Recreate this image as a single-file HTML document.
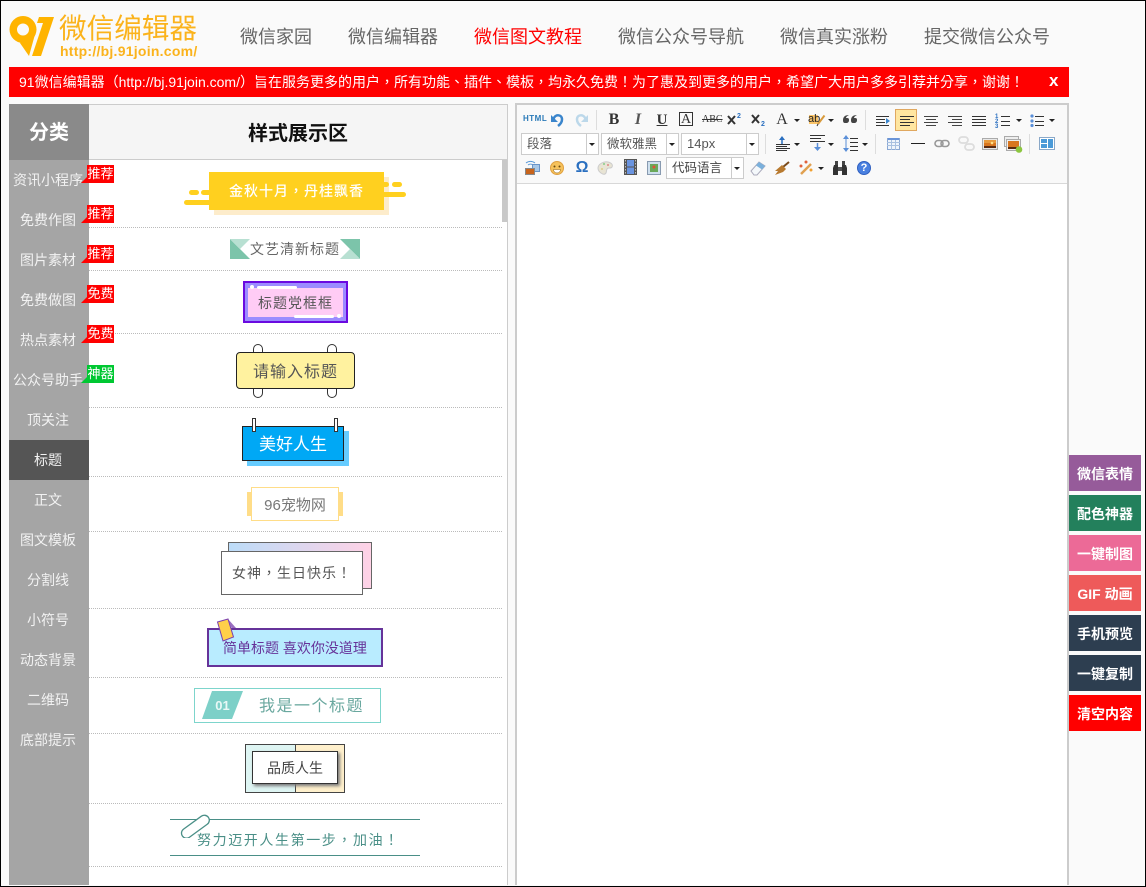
<!DOCTYPE html>
<html><head><meta charset="utf-8"><style>
*{box-sizing:border-box}
html,body{margin:0;padding:0}
body{width:1146px;height:887px;position:relative;overflow:hidden;background:#fafafa;font-family:"Liberation Sans","Noto Sans CJK SC",sans-serif;color:#666;text-spacing-trim:space-all}
div,span,svg{position:absolute}
.tc{font-family:"Liberation Sans","Noto Sans CJK TC",sans-serif}
.c{display:flex;align-items:center;justify-content:center;white-space:nowrap}
.nav{top:24px;font-size:18px;line-height:26px;color:#666;white-space:nowrap}
.s{left:8px;width:80px;height:40px;color:#f2f2f2;font-size:14px}
.t{left:87px;width:27px;height:18px;color:#fff;font-size:13px;line-height:18px;text-align:center;background:#f00;white-space:nowrap}
.tr{left:81px;width:0;height:0;border-style:solid;border-width:0 0 6px 6px;border-color:transparent transparent #f00 transparent}
.d{left:89px;width:413px;height:0;border-top:1px dotted #bbb}
.r{left:1069px;width:72px;height:36px;color:#fff;font-size:14px;font-weight:bold;padding-top:2px}
.sel{height:22px;border:1px solid #ccc;background:#fff;color:#555;font-size:12.5px;line-height:20px;padding-left:5px;white-space:nowrap}
.sel i{position:absolute;right:11px;top:0;height:20px;width:1px;background:#ccc}
.sel b{position:absolute;right:3px;top:9px;width:0;height:0;border:3px solid transparent;border-top:3px solid #222}
.ar{width:0;height:0;border:3px solid transparent;border-top:3px solid #222}
.sep{width:1px;height:20px;background:#ddd}
.tb{font-family:"Liberation Serif",serif;color:#333;white-space:nowrap;text-align:center;line-height:18px}
</style></head><body>
<!-- logo -->
<svg style="left:0;top:0" width="60" height="60"><g fill="#ffb400"><path fill-rule="evenodd" d="M23 16a13.500 13.500 0 1 0 0 27 13.500 13.500 0 0 0 0-27zm0 7.500a6 6 0 1 1 0 12 6 6 0 0 1 0-12z"/><path d="M36.500 29L29 56 20 43 27 36z"/><path d="M39 17H54L41 56H32L43 23H37z"/></g></svg>
<div style="left:59px;top:11px;font-size:27.6px;line-height:36px;color:#fbb31c;white-space:nowrap">微信编辑器</div>
<div style="left:60px;top:43px;font-size:14px;line-height:16px;color:#fbb31c;font-weight:bold;letter-spacing:.25px;white-space:nowrap">http://bj.91join.com/</div>
<div class="nav" style="left:240px">微信家园</div>
<div class="nav" style="left:348px">微信编辑器</div>
<div class="nav" style="left:474px;color:#f00">微信图文教程</div>
<div class="nav" style="left:618px">微信公众号导航</div>
<div class="nav" style="left:780px">微信真实涨粉</div>
<div class="nav" style="left:924px">提交微信公众号</div>
<!-- red bar -->
<div class="tc" style="left:9px;top:67px;width:1060px;height:30px;background:#f00;color:#fff;font-size:14px;line-height:30px;padding-left:10px;white-space:nowrap">91微信编辑器（http://bj.91join.com/）旨在服务更多的用户，所有功能、插件、模板，均永久免费！为了惠及到更多的用户，希望广大用户多多引荐并分享，谢谢！</div>
<div style="left:1049px;top:66px;height:30px;line-height:30px;color:#fff;font-weight:bold;font-size:17px">x</div>
<!-- sidebar -->
<div style="left:9px;top:104px;width:80px;height:781px;background:#a5a5a5"></div>
<div class="c" style="left:9px;top:104px;width:80px;height:56px;background:#8a8a8a;color:#fff;font-size:20px;font-weight:bold;padding-bottom:3px">分类</div>
<div style="left:9px;top:440px;width:80px;height:40px;background:#555"></div>
<div class="s c" style="top:160px">资讯小程序</div>
<div class="s c" style="top:200px">免费作图</div>
<div class="s c" style="top:240px">图片素材</div>
<div class="s c" style="top:280px">免费做图</div>
<div class="s c" style="top:320px">热点素材</div>
<div class="s c" style="top:360px">公众号助手</div>
<div class="s c" style="top:400px">顶关注</div>
<div class="s c" style="top:440px">标题</div>
<div class="s c" style="top:480px">正文</div>
<div class="s c" style="top:520px">图文模板</div>
<div class="s c" style="top:560px">分割线</div>
<div class="s c" style="top:600px">小符号</div>
<div class="s c" style="top:640px">动态背景</div>
<div class="s c" style="top:680px">二维码</div>
<div class="s c" style="top:720px">底部提示</div>
<!-- middle -->
<div style="left:89px;top:104px;width:419px;height:781px;background:#fff;border-top:1px solid #ccc;border-right:1px solid #ccc"></div>
<div class="c" style="left:89px;top:105px;width:418px;height:55px;background:#f5f5f5;border-bottom:1px solid #ccc;color:#111;font-size:20px;font-weight:bold;padding-bottom:2px">样式展示区</div>
<div style="left:502px;top:160px;width:5px;height:62px;background:#c8c8c8"></div>
<div class="d" style="top:227px"></div><div class="d" style="top:270px"></div><div class="d" style="top:333px"></div><div class="d" style="top:407px"></div><div class="d" style="top:476px"></div><div class="d" style="top:531px"></div><div class="d" style="top:608px"></div><div class="d" style="top:677px"></div><div class="d" style="top:733px"></div><div class="d" style="top:803px"></div><div class="d" style="top:866px"></div>
<div class="tr" style="top:177px"></div><div class="t" style="top:165px">推荐</div>
<div class="tr" style="top:217px"></div><div class="t" style="top:205px">推荐</div>
<div class="tr" style="top:257px"></div><div class="t" style="top:245px">推荐</div>
<div class="tr" style="top:297px"></div><div class="t" style="top:285px">免费</div>
<div class="tr" style="top:337px"></div><div class="t" style="top:325px">免费</div>
<div class="tr" style="top:377px;border-bottom-color:#00c832"></div><div class="t" style="top:365px;background:#00c832">神器</div>
<!-- 1 -->
<div style="left:214px;top:177px;width:175px;height:38px;background:#fdeccb"></div>
<svg style="left:184px;top:181px" width="224" height="25"><g fill="#ffd01f"><rect x="5" y="9" width="10" height="5" rx="2.500"/><rect x="17" y="9" width="10" height="5" rx="2.500"/><rect x="0" y="19" width="30" height="5" rx="2.500"/><rect x="198" y="1" width="7" height="5" rx="2.500"/><rect x="208" y="1" width="10" height="5" rx="2.500"/><rect x="198" y="11" width="24" height="5" rx="2.500"/></g></svg>
<div class="c tc" style="left:209px;top:172px;width:175px;height:38px;background:#ffd01f;color:#fff;font-size:14px;letter-spacing:1px;font-weight:500">金秋十月，丹桂飘香</div>
<!-- 2 -->
<svg style="left:230px;top:239px" width="130" height="20"><path fill="#7cc4aa" d="M0 0L20 20H0z"/><path fill="#b8e0d2" d="M0 0H20L10 10z"/><path fill="#7cc4aa" d="M130 20L110 0H130z"/><path fill="#b8e0d2" d="M130 20H110L120 10z"/></svg>
<div class="c" style="left:230px;top:239px;width:130px;height:20px;font-size:14px;letter-spacing:1px;color:#666">文艺清新标题</div>
<!-- 3 -->
<div style="left:243px;top:281px;width:105px;height:42px;border:2px solid #6a0ae0;background:#9b8cff"></div>
<div class="c" style="left:248px;top:288px;width:95px;height:29px;background:#ffccf5;font-size:14px;letter-spacing:1px;color:#555">标题党框框</div>
<div style="left:257px;top:286px;width:40px;height:3px;background:#fff;border-radius:2px"></div>
<div style="left:294px;top:315px;width:40px;height:3px;background:#fff;border-radius:2px"></div>
<div style="left:250px;top:285px;width:4px;height:4px;background:#fff;border-radius:50%"></div>
<div style="left:337px;top:314px;width:4px;height:4px;background:#fff;border-radius:50%"></div>
<!-- 4 -->
<svg style="left:252px;top:344px" width="86" height="54"><g fill="#fff" stroke="#333"><rect x="1.500" y=".5" width="9" height="18" rx="4.500"/><rect x="75.500" y=".5" width="9" height="18" rx="4.500"/><rect x="1.500" y="35.500" width="9" height="18" rx="4.500"/><rect x="75.500" y="35.500" width="9" height="18" rx="4.500"/></g></svg>
<div class="c" style="left:236px;top:352px;width:119px;height:37px;background:#fff29f;border:1px solid #222;border-radius:4px;font-size:16px;letter-spacing:1px;color:#555;padding-bottom:2px">请输入标题</div>
<!-- 5 -->
<div style="left:247px;top:431px;width:102px;height:35px;background:#66ccff"></div>
<div class="c" style="left:242px;top:426px;width:102px;height:35px;background:#00a8f5;border:1px solid #222;font-size:17px;color:#fff;padding-bottom:2px">美好人生</div>
<div style="left:252px;top:418px;width:4px;height:14px;background:#fff;border:1px solid #333"></div>
<div style="left:334px;top:418px;width:4px;height:14px;background:#fff;border:1px solid #333"></div>
<!-- 6 -->
<div style="left:247px;top:492px;width:96px;height:24px;background:#ffdd88"></div>
<div class="c" style="left:251px;top:487px;width:88px;height:34px;background:#fff;border:1px solid #ffdd88;font-size:15px;color:#777">96宠物网</div>
<!-- 7 -->
<div style="left:228px;top:542px;width:144px;height:47px;border:1px solid #666;background:linear-gradient(90deg,#bcdcf8,#ffd2e6)"></div>
<div class="c tc" style="left:221px;top:551px;width:142px;height:44px;background:#fff;border:1px solid #666;font-size:14px;letter-spacing:1px;color:#555">女神，生日快乐！</div>
<!-- 8 -->
<div class="c" style="left:207px;top:628px;width:176px;height:39px;background:#b9ecff;border:2px solid #663399;font-size:14px;color:#663399;padding-top:1px">简单标题 喜欢你没道理</div>
<svg style="left:216px;top:618px" width="24" height="26"><path d="M12 1L20 10 15.500 10z" fill="#9a6fc0"/><path d="M1.500 4L12 1 17.500 19 7 23z" fill="#ffd04a" stroke="#7a3fb0"/></svg>
<!-- 9 -->
<div style="left:194px;top:688px;width:187px;height:35px;border:1px solid #7dd5cc;background:#fff"></div>
<svg style="left:202px;top:691px" width="42" height="29"><path fill="#7dd0c8" d="M10 0H41L30 28H0z"/></svg>
<div class="c" style="left:202px;top:691px;width:41px;height:28px;color:#e8f8f6;font-size:13px;font-weight:bold">01</div>
<div style="left:259px;top:696px;font-size:16px;line-height:22px;letter-spacing:1.500px;color:#6aa89f;white-space:nowrap">我是一个标题</div>
<!-- 10 -->
<div style="left:245px;top:744px;width:51px;height:49px;background:#def5f3;border:1px solid #444"></div>
<div style="left:295px;top:744px;width:50px;height:49px;background:#fff0cc;border:1px solid #444"></div>
<div class="c" style="left:252px;top:751px;width:86px;height:33px;background:#fff;border:1px solid #333;box-shadow:2px 2px 3px #777;font-size:14px;color:#444">品质人生</div>
<!-- 11 -->
<div style="left:170px;top:819px;width:250px;height:1px;background:#4a8f87"></div>
<div style="left:170px;top:855px;width:250px;height:1px;background:#4a8f87"></div>
<svg style="left:178px;top:812px" width="34" height="26"><rect x="1.500" y="10" width="32" height="10" rx="5" fill="#fff" stroke="#4a8f87" stroke-width="1.300" transform="rotate(-36 17 15)"/></svg>
<div class="tc" style="left:197px;top:830px;font-size:14px;line-height:20px;letter-spacing:1.600px;color:#4a8f87;white-space:nowrap">努力迈开人生第一步，加油！</div>
<!-- editor -->
<div style="left:515px;top:103px;width:554px;height:782px;background:#fff;border:2px solid #ccc;border-bottom:0"></div>
<div style="left:517px;top:105px;width:550px;height:79px;background:#f9f9f9;border-bottom:1px solid #d8d8d8"></div>
<!-- toolbar row1 -->
<div style="left:523px;top:114px;font-size:8px;line-height:10px;font-weight:bold;color:#2a7ab8;letter-spacing:.5px">HTML</div>
<svg style="left:550px;top:112px" width="15" height="16"><path d="M3.500 7C5 2 12 2 12 7.500c0 3-2 5-4 6.500" fill="none" stroke="#3a85cc" stroke-width="2.500"/><path d="M1 3v7h7z" fill="#3a85cc"/></svg>
<svg style="left:574px;top:112px" width="15" height="16"><path d="M11.500 7C10 2 3 2 3 7.500c0 3 2 5 4 6.500" fill="none" stroke="#bcd8ea" stroke-width="2.500"/><path d="M14 3v7H7z" fill="#bcd8ea"/></svg>
<div class="sep" style="left:596px;top:110px"></div>
<div class="tb" style="left:607px;top:111px;width:14px;font-size:16px;font-weight:bold">B</div>
<div class="tb" style="left:631px;top:111px;width:14px;font-size:16px;font-style:italic;font-weight:bold;color:#555">I</div>
<div class="tb" style="left:655px;top:111px;width:14px;font-size:15px;font-weight:bold;text-decoration:underline">U</div>
<div class="tb" style="left:679px;top:112px;width:14px;height:14px;font-size:14px;line-height:13px;border:1px solid #333">A</div>
<div class="tb" style="left:702px;top:111px;width:16px;font-size:10px;text-decoration:line-through">ABC</div>
<svg style="left:727px;top:112px" width="16" height="14"><path d="M1 4l7 8M8 4l-7 8" stroke="#333" stroke-width="2"/><text x="10" y="6" font-size="7" font-weight="bold" fill="#2a6fc0" font-family="Liberation Sans">2</text></svg>
<svg style="left:751px;top:112px" width="16" height="15"><path d="M1 3l7 8M8 3l-7 8" stroke="#333" stroke-width="2"/><text x="10" y="14" font-size="7" font-weight="bold" fill="#2a6fc0" font-family="Liberation Sans">2</text></svg>
<div class="tb" style="left:775px;top:111px;width:14px;font-size:16px">A</div><div class="ar" style="left:794px;top:119px"></div>
<div style="left:809px;top:115px;width:9px;height:9px;background:#fbc56a"></div><div class="tb" style="left:808px;top:113px;font-family:'Liberation Sans';font-size:11px;line-height:13px;color:#222">ab</div>
<svg style="left:816px;top:114px" width="10" height="13"><path d="M8.500 1.500L2 10" stroke="#d89a3c" stroke-width="2"/><path d="M2 10L1 12" stroke="#333"/></svg>
<div class="ar" style="left:828px;top:119px"></div>
<svg style="left:842px;top:114px" width="16" height="10"><path d="M7 1C3 1 1 3 1 6s1 3 3 3 3-1 3-3-1-2-3-2c0-1 1-2 3-3zM15 1c-4 0-6 2-6 5s1 3 3 3 3-1 3-3-1-2-3-2c0-1 1-2 3-3z" fill="#444"/></svg>
<div class="sep" style="left:865px;top:110px"></div>
<svg style="left:876px;top:115px" width="15" height="12"><path d="M0 1.500h13M0 4.500h9M0 7.500h9M0 10.500h13" stroke="#333"/><path d="M10 3l4 3-4 3z" fill="#3a85cc"/></svg>
<div style="left:895px;top:109px;width:22px;height:22px;background:#ffe6a0;border:1px solid #e0a860"></div>
<svg style="left:900px;top:115px" width="14" height="12"><path d="M0 1.500h14M0 4.500h10M0 7.500h14M0 10.500h10" stroke="#333"/></svg>
<svg style="left:924px;top:115px" width="14" height="12"><path d="M0 1.500h14M2 4.500h10M0 7.500h14M2 10.500h10" stroke="#444"/></svg>
<svg style="left:948px;top:115px" width="14" height="12"><path d="M0 1.500h14M4 4.500h10M0 7.500h14M4 10.500h10" stroke="#444"/></svg>
<svg style="left:972px;top:115px" width="14" height="12"><path d="M0 1.500h14M0 4.500h14M0 7.500h14M0 10.500h14" stroke="#333"/></svg>
<svg style="left:995px;top:112px" width="16" height="16"><path d="M6 4.500h9M6 9.500h9M6 13.500h9" stroke="#333"/><text x="0" y="6" font-size="6" font-weight="bold" fill="#2a6fc0" font-family="Liberation Sans">1</text><text x="0" y="11" font-size="6" font-weight="bold" fill="#2a6fc0" font-family="Liberation Sans">2</text><text x="0" y="16" font-size="6" font-weight="bold" fill="#2a6fc0" font-family="Liberation Sans">3</text></svg><div class="ar" style="left:1016px;top:119px"></div>
<svg style="left:1030px;top:112px" width="15" height="16"><path d="M5 4.500h9M5 9.500h9M5 13.500h9" stroke="#333"/><g fill="#5a8fd8"><circle cx="2" cy="4" r="1.600"/><circle cx="2" cy="9" r="1.600"/><circle cx="2" cy="13.500" r="1.600"/></g></svg><div class="ar" style="left:1049px;top:119px"></div>
<!-- row2 -->
<div class="sel" style="left:521px;top:133px;width:78px">段落<i></i><b></b></div>
<div class="sel" style="left:601px;top:133px;width:78px">微软雅黑<i></i><b></b></div>
<div class="sel" style="left:681px;top:133px;width:78px;font-size:13px">14px<i></i><b></b></div>
<div class="sep" style="left:765px;top:134px"></div>
<svg style="left:775px;top:136px" width="16" height="17"><path d="M7 0l3 4H4z" fill="#2a6fc0"/><path d="M7 3v5" stroke="#2a6fc0" stroke-width="1.500"/><path d="M1 8.500h14M1 10.500h11M1 12.500h14M1 14.500h11" stroke="#333"/></svg><div class="ar" style="left:794px;top:143px"></div>
<svg style="left:810px;top:135px" width="15" height="17"><path d="M0 .5h15M0 3.500h11M0 6.500h15" stroke="#333"/><path d="M7.500 8v5" stroke="#5a8fd8" stroke-width="1.500"/><path d="M4 12h7l-3.500 4z" fill="#5a8fd8"/></svg><div class="ar" style="left:828px;top:143px"></div>
<svg style="left:843px;top:135px" width="15" height="17"><path d="M7 3.500h8M7 7.500h8M7 11.500h8M7 15.500h8" stroke="#333"/><path d="M3 4v9" stroke="#5a8fd8"/><path d="M3 0l3 4H0zM3 17l3-4H0z" fill="#5a8fd8"/></svg><div class="ar" style="left:862px;top:143px"></div>
<div class="sep" style="left:875px;top:134px"></div>
<svg style="left:887px;top:138px" width="13" height="12"><rect x=".5" y=".5" width="12" height="11" fill="#eef4fb" stroke="#8aa8d4"/><path d="M0 4.500h13M0 7.500h13M4.500 0v12M8.500 0v12" stroke="#a8c0e0"/><rect x="1" y="0" width="11" height="2" fill="#6a94d8"/></svg>
<div style="left:911px;top:143px;width:14px;height:1px;background:#222"></div>
<svg style="left:934px;top:139px" width="16" height="9"><rect x="1" y="1.500" width="8" height="6" rx="3" fill="none" stroke="#999" stroke-width="1.600"/><rect x="7" y="1.500" width="8" height="6" rx="3" fill="none" stroke="#999" stroke-width="1.600"/></svg>
<svg style="left:958px;top:136px" width="17" height="15"><rect x="1" y="1" width="9" height="6" rx="3" fill="none" stroke="#ddd" stroke-width="1.800"/><rect x="7" y="8" width="9" height="6" rx="3" fill="none" stroke="#ddd" stroke-width="1.800"/></svg>
<svg style="left:982px;top:138px" width="16" height="12"><rect x=".5" y=".5" width="15" height="11" fill="#e8e8e8" stroke="#aaa"/><rect x="2" y="2" width="12" height="8" fill="#d9761f"/><rect x="2" y="2" width="12" height="3" fill="#e89a3c"/><rect x="2" y="8" width="12" height="2" fill="#5a2a10"/><circle cx="10" cy="5" r="1.300" fill="#ffe08a"/></svg>
<svg style="left:1004px;top:136px" width="19" height="17"><rect x=".5" y=".5" width="14" height="10" fill="#eee" stroke="#aaa"/><rect x="2.500" y="3.500" width="14" height="11" fill="#eee" stroke="#aaa"/><rect x="4" y="5" width="11" height="8" fill="#d9761f"/><rect x="4" y="11" width="11" height="2" fill="#5a2a10"/><circle cx="15" cy="13.500" r="3.300" fill="#8cc63f"/></svg>
<div class="sep" style="left:1029px;top:134px"></div>
<svg style="left:1039px;top:137px" width="16" height="13"><rect x=".5" y=".5" width="15" height="12" fill="#fff" stroke="#8aa8c8"/><rect x="2" y="2" width="6" height="4" fill="#4a9ad8"/><rect x="2" y="7" width="6" height="4" fill="#4a9ad8"/><rect x="9" y="2" width="5" height="9" fill="#4a9ad8"/></svg>
<!-- row3 -->
<svg style="left:525px;top:159px" width="16" height="16"><path d="M1 4a7 7 0 0 1 9 0M3 6a4 4 0 0 1 5 0" fill="none" stroke="#5a9ad8"/><rect x="7.500" y="5.500" width="7" height="7" fill="#a8c8e8" stroke="#6a94c8"/><rect x=".5" y="9.500" width="9" height="6" fill="#c8641c" stroke="#888"/></svg>
<svg style="left:550px;top:161px" width="14" height="14"><circle cx="7" cy="7" r="6.500" fill="#f6c25c" stroke="#e0a040"/><circle cx="4.500" cy="5.500" r="1" fill="#6a4a10"/><circle cx="9.500" cy="5.500" r="1" fill="#6a4a10"/><path d="M3.500 8.500h7a3.500 3.500 0 0 1-7 0z" fill="#fff" stroke="#8a5a10" stroke-width=".5"/></svg>
<div style="left:575px;top:159px;width:14px;font-size:16px;line-height:18px;font-weight:bold;color:#2a6fc0;font-family:'Liberation Sans';text-align:center">Ω</div>
<svg style="left:597px;top:160px" width="17" height="15"><path d="M1 8c0-4 6-7 10-6s5 3 4 5-4 0-5 2 0 4-2 5-7-2-7-6z" fill="#e8e4d4" stroke="#ccc"/><circle cx="11" cy="5" r="1" fill="#d88"/><circle cx="7" cy="4" r="1" fill="#8c8"/><circle cx="5" cy="9" r="1" fill="#dc8"/></svg>
<svg style="left:624px;top:159px" width="13" height="16"><rect width="13" height="16" fill="#555"/><rect x="3" y="1" width="7" height="6.500" fill="#6a94e0"/><rect x="3" y="8.500" width="7" height="6.500" fill="#6a94e0"/><path d="M1.500 1v14M11.500 1v14" stroke="#bbb" stroke-dasharray="1.500 1.500"/></svg>
<svg style="left:647px;top:161px" width="14" height="14"><rect x=".5" y=".5" width="13" height="13" fill="#cfe0ee" stroke="#889ab0"/><rect x="3" y="3" width="8" height="8" fill="#6aa85a"/><circle cx="7" cy="6" r="1.500" fill="#e0503a"/></svg>
<div class="sel" style="left:666px;top:157px;width:78px;color:#444">代码语言<i></i><b></b></div>
<svg style="left:750px;top:161px" width="16" height="15"><path d="M1 10l8-9 6 4-8 9H4z" fill="#f4f8fb" stroke="#aab"/><path d="M9 1l6 4-3 3.500-6-4z" fill="#7ab0dc"/></svg>
<svg style="left:774px;top:161px" width="16" height="14"><path d="M15 1L9 6" stroke="#7a4a1a" stroke-width="2"/><path d="M8 4l4 4-3 3-8 3 3-4-3 0z" fill="#b87a30"/></svg>
<svg style="left:798px;top:160px" width="16" height="15"><path d="M3 14L13 4" stroke="#e0a050" stroke-width="2.500"/><circle cx="3" cy="6" r="1.500" fill="#e0603a"/><circle cx="8" cy="2" r="1.500" fill="#e0603a"/><circle cx="13" cy="10" r="1.500" fill="#f0a030"/></svg><div class="ar" style="left:818px;top:167px"></div>
<svg style="left:833px;top:161px" width="14" height="14"><path d="M1 4h4v10H0V7zM9 4h4l1 3v7H9z" fill="#333"/><rect x="5" y="6" width="4" height="4" fill="#555"/><rect x="2" y="0" width="3" height="4" fill="#444"/><rect x="9" y="0" width="3" height="4" fill="#444"/></svg>
<div class="c" style="left:857px;top:161px;width:14px;height:14px;border-radius:50%;background:#4a80e0;border:1px solid #3060c0;color:#fff;font-size:11px;font-weight:bold">?</div>
<!-- right buttons -->
<div class="r c" style="top:455px;background:#965b9a">微信表情</div>
<div class="r c" style="top:495px;background:#23805c">配色神器</div>
<div class="r c" style="top:535px;background:#ec6a97">一键制图</div>
<div class="r c" style="top:575px;background:#ee5a5a">GIF 动画</div>
<div class="r c" style="top:615px;background:#2d3e50">手机预览</div>
<div class="r c" style="top:655px;background:#2d3e50">一键复制</div>
<div class="r c" style="top:695px;background:#f00">清空内容</div>
<!-- frame -->
<div style="left:0;top:0;width:1146px;height:887px;border:1px solid #000;pointer-events:none"></div>
</body></html>
